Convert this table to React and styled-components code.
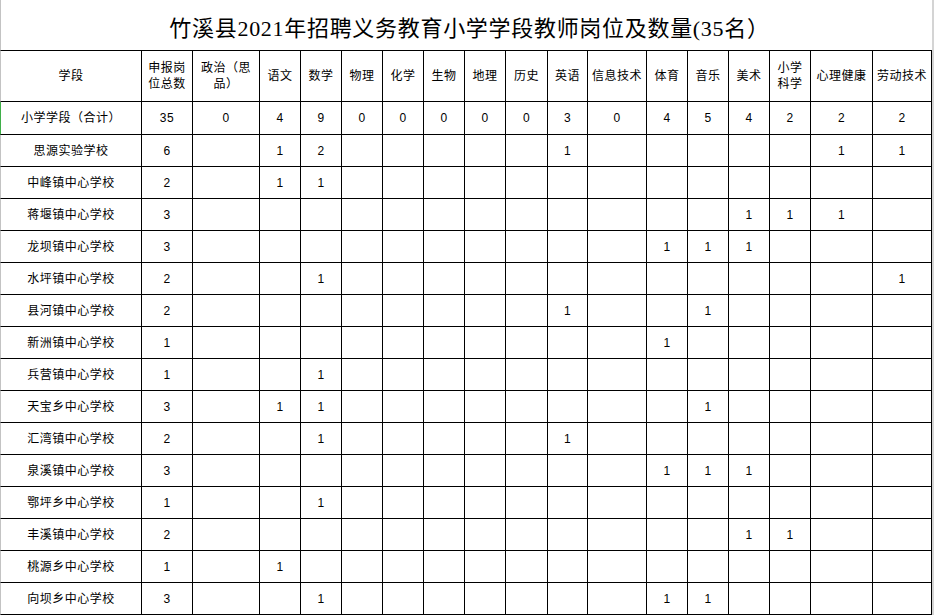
import React from 'react'
import styled, { createGlobalStyle } from 'styled-components'

const GlobalStyle = createGlobalStyle`
  html, body {
    margin: 0;
    padding: 0;
    background: #fff;
  }
`

const COLS = [142, 51, 67, 41, 41, 41, 41, 41, 41, 42, 40, 59, 41, 41, 41, 41, 62, 59]

const HEADERS = [
  '学段', '申报岗\n位总数', '政治（思\n品）', '语文', '数学', '物理', '化学', '生物', '地理',
  '历史', '英语', '信息技术', '体育', '音乐', '美术', '小学\n科学', '心理健康', '劳动技术'
]

const TOTAL = ['小学学段（合计）', 35, 0, 4, 9, 0, 0, 0, 0, 0, 3, 0, 4, 5, 4, 2, 2, 2]

// column index -> count, blanks elsewhere
const SCHOOLS = [
  ['思源实验学校', 6, { 3: 1, 4: 2, 10: 1, 16: 1, 17: 1 }],
  ['中峰镇中心学校', 2, { 3: 1, 4: 1 }],
  ['蒋堰镇中心学校', 3, { 14: 1, 15: 1, 16: 1 }],
  ['龙坝镇中心学校', 3, { 12: 1, 13: 1, 14: 1 }],
  ['水坪镇中心学校', 2, { 4: 1, 17: 1 }],
  ['县河镇中心学校', 2, { 10: 1, 13: 1 }],
  ['新洲镇中心学校', 1, { 12: 1 }],
  ['兵营镇中心学校', 1, { 4: 1 }],
  ['天宝乡中心学校', 3, { 3: 1, 4: 1, 13: 1 }],
  ['汇湾镇中心学校', 2, { 4: 1, 10: 1 }],
  ['泉溪镇中心学校', 3, { 12: 1, 13: 1, 14: 1 }],
  ['鄂坪乡中心学校', 1, { 4: 1 }],
  ['丰溪镇中心学校', 2, { 14: 1, 15: 1 }],
  ['桃源乡中心学校', 1, { 3: 1 }],
  ['向坝乡中心学校', 3, { 4: 1, 12: 1, 13: 1 }]
]

const toCells = ([name, total, counts]) =>
  [name, total, ...Array.from({ length: 16 }, (_, i) => (counts[i + 2] ?? ''))]

const Sheet = styled.div`
  display: grid;
  grid-template-columns: ${COLS.map((w) => `${w}px`).join(' ')};
  grid-template-rows: 51px 51px 33px repeat(15, 32px);
  width: 934px;
  box-sizing: border-box;
  border-right: 2px solid #d4d4d4;
  color: #000;
`

const Title = styled.div`
  grid-column: 1 / -1;
  display: flex;
  align-items: center;
  justify-content: center;
  box-sizing: border-box;
  border-left: 1px solid #c3c3c3;
  border-bottom: 1px solid #000;
  padding: 1px 0 0 6px;
  font-family: "Liberation Serif", "Noto Sans CJK SC", serif;
  font-size: 22px;
  letter-spacing: 0.7px;
  white-space: nowrap;
`

const Cell = styled.div`
  display: flex;
  align-items: center;
  justify-content: center;
  box-sizing: border-box;
  border-right: 1px solid #000;
  border-bottom: 1px solid #000;
  border-left: ${({ $first, $mark }) => ($first ? `1px solid ${$mark ? '#3fae49' : '#c3c3c3'}` : 'none')};
  font-family: "Liberation Sans", "Noto Sans CJK SC", sans-serif;
  font-size: 12px;
  letter-spacing: 0.5px;
  line-height: 16px;
  text-align: center;
  white-space: pre-line;
  overflow: hidden;
`

const Row = ({ cells, mark }) =>
  cells.map((value, i) => (
    <Cell key={i} $first={i === 0} $mark={mark}>
      {value}
    </Cell>
  ))

export default function App () {
  return (
    <>
      <GlobalStyle />
      <Sheet>
        <Title>竹溪县2021年招聘义务教育小学学段教师岗位及数量(35名）</Title>
        <Row cells={HEADERS} />
        <Row cells={TOTAL} mark />
        {SCHOOLS.map((school) => (
          <Row key={school[0]} cells={toCells(school)} />
        ))}
      </Sheet>
    </>
  )
}
